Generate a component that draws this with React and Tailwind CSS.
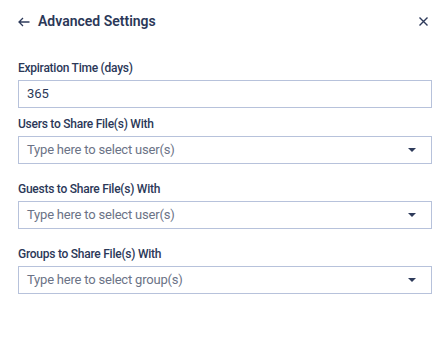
import React from 'react';

function Caret() {
  return (
    <svg width="8" height="4" viewBox="0 0 8 4" className="shrink-0">
      <path d="M0 0h8L4 4z" fill="#2e3b5b" />
    </svg>
  );
}

function SelectField({ label, placeholder, className }) {
  return (
    <div className={className}>
      <label className="block text-[12px] leading-[16px] font-medium tracking-[-0.25px] text-[#2b3858] mb-[4px]">{label}</label>
      <div className="h-[28px] border border-[#b7c2db] flex items-center justify-between pl-[8px] pr-[15px]">
        <span className="text-[13px] tracking-[-0.2px] text-[#6b7386]">{placeholder}</span>
        <Caret />
      </div>
    </div>
  );
}

export default function App() {
  return (
    <div className="bg-white w-[447px] h-[342px] pl-[18px] pr-[15px] font-['Roboto',sans-serif]">
      <div className="flex items-center justify-between h-[43px]">
        <div className="flex items-center gap-[8px]">
          <svg width="12" height="10" viewBox="0 0 12 10" fill="none" stroke="#2e3b5b" strokeWidth="1.3">
            <path d="M11.5 5H1M5 1L1 5l4 4" />
          </svg>
          <span className="text-[14px] font-semibold text-[#2b3858]">Advanced Settings</span>
        </div>
        <svg width="9" height="9" viewBox="0 0 9 9" stroke="#2e3b5b" strokeWidth="1.4" className="mr-[4px]">
          <path d="M0.5 0.5l8 8M8.5 0.5l-8 8" />
        </svg>
      </div>
      <div className="mt-[17px]">
        <label className="block text-[12px] leading-[16px] font-medium tracking-[-0.25px] text-[#2b3858] mb-[4px]">Expiration Time (days)</label>
        <div className="h-[28px] border border-[#b7c2db] flex items-center pl-[8px]">
          <span className="text-[13px] text-[#2b3858]">365</span>
        </div>
      </div>
      <SelectField className="mt-[8px]" label="Users to Share File(s) With" placeholder="Type here to select user(s)" />
      <SelectField className="mt-[17px]" label="Guests to Share File(s) With" placeholder="Type here to select user(s)" />
      <SelectField className="mt-[17px]" label="Groups to Share File(s) With" placeholder="Type here to select group(s)" />
    </div>
  );
}
